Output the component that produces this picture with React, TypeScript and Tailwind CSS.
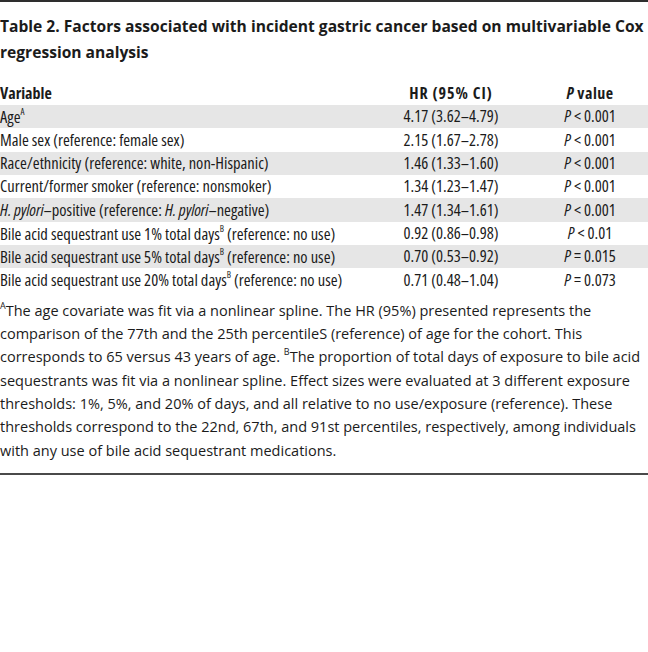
import React from 'react';

type Row = { variable: React.ReactNode; hr: string; p: string };

const Sup = ({ children }: { children: React.ReactNode }) => (
  <sup className="text-[9px] relative -top-[1px] align-super leading-none">{children}</sup>
);

const rows: Row[] = [
  { variable: <>Age<Sup>A</Sup></>, hr: '4.17 (3.62–4.79)', p: '< 0.001' },
  { variable: 'Male sex (reference: female sex)', hr: '2.15 (1.67–2.78)', p: '< 0.001' },
  { variable: 'Race/ethnicity (reference: white, non-Hispanic)', hr: '1.46 (1.33–1.60)', p: '< 0.001' },
  { variable: 'Current/former smoker (reference: nonsmoker)', hr: '1.34 (1.23–1.47)', p: '< 0.001' },
  {
    variable: (
      <>
        <i>H. pylori</i>–positive (reference: <i>H. pylori</i>–negative)
      </>
    ),
    hr: '1.47 (1.34–1.61)',
    p: '< 0.001',
  },
  {
    variable: <>Bile acid sequestrant use 1% total days<Sup>B</Sup> (reference: no use)</>,
    hr: '0.92 (0.86–0.98)',
    p: '< 0.01',
  },
  {
    variable: <>Bile acid sequestrant use 5% total days<Sup>B</Sup> (reference: no use)</>,
    hr: '0.70 (0.53–0.92)',
    p: '= 0.015',
  },
  {
    variable: <>Bile acid sequestrant use 20% total days<Sup>B</Sup> (reference: no use)</>,
    hr: '0.71 (0.48–1.04)',
    p: '= 0.073',
  },
];

export default function App() {
  return (
    <div className="w-[648px] bg-white text-[#1b1b1b] font-['Open_Sans',sans-serif]">
      <div className="border-t-2 border-[#2e2e2e] pt-[11px]">
        <h1 className="text-[15.6px] font-bold leading-[26px] whitespace-nowrap">
          Table 2. Factors associated with incident gastric cancer based on multivariable Cox
          <br />
          regression analysis
        </h1>

        <div className="mt-[16px] grid grid-cols-[370px_162px_116px] text-[16px] font-bold h-[24px] items-center [font-stretch:condensed]">
          <div>Variable</div>
          <div className="text-center tracking-[1px]">HR (95% CI)</div>
          <div className="text-center tracking-[0.5px]">
            <i>P</i> value
          </div>
        </div>

        <div className="[font-stretch:condensed]">
          {rows.map((row, i) => (
            <div
              key={i}
              className={`grid grid-cols-[370px_162px_116px] h-[23.33px] items-center text-[16.5px] leading-none ${
                i % 2 === 0 ? 'bg-[#e6e6e6]' : 'bg-white'
              }`}
            >
              <div className="whitespace-nowrap">{row.variable}</div>
              <div className="text-center">{row.hr}</div>
              <div className="text-center">
                <i>P</i> {row.p}
              </div>
            </div>
          ))}
        </div>

        <p className="mt-[7px] text-[14.5px] leading-[23.33px] whitespace-nowrap">
          <Sup>A</Sup>The age covariate was fit via a nonlinear spline. The HR (95%) presented represents the
          <br />
          comparison of the 77th and the 25th percentileS (reference) of age for the cohort. This
          <br />
          corresponds to 65 versus 43 years of age. <Sup>B</Sup>The proportion of total days of exposure to bile acid
          <br />
          sequestrants was fit via a nonlinear spline. Effect sizes were evaluated at 3 different exposure
          <br />
          thresholds: 1%, 5%, and 20% of days, and all relative to no use/exposure (reference). These
          <br />
          thresholds correspond to the 22nd, 67th, and 91st percentiles, respectively, among individuals
          <br />
          with any use of bile acid sequestrant medications.
        </p>

        <div className="mt-[11px] border-t-2 border-[#4a4a4a]" />
      </div>
    </div>
  );
}
